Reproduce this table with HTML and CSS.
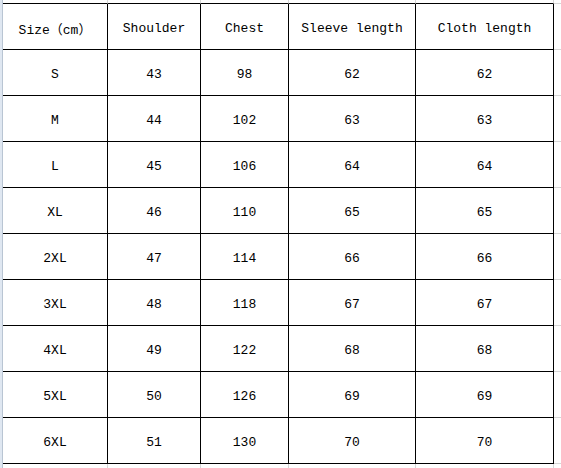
FILE: index.html
```html
<!DOCTYPE html>
<html>
<head>
<meta charset="utf-8">
<link rel="stylesheet" href="styles.css">
</head>
<body>
<div class="sheet">
  <div class="rh"></div><div class="gt"></div><div class="gt"></div><div class="gt"></div><div class="gt"></div><div class="gt"></div><div class="gr"></div>

  <div class="rh"></div><div class="c">Size（cm）</div><div class="c">Shoulder</div><div class="c">Chest</div><div class="c">Sleeve length</div><div class="c">Cloth length</div><div class="gr"></div>
  <div class="rh"></div><div class="c">S</div><div class="c">43</div><div class="c">98</div><div class="c">62</div><div class="c">62</div><div class="gr"></div>
  <div class="rh"></div><div class="c">M</div><div class="c">44</div><div class="c">102</div><div class="c">63</div><div class="c">63</div><div class="gr"></div>
  <div class="rh"></div><div class="c">L</div><div class="c">45</div><div class="c">106</div><div class="c">64</div><div class="c">64</div><div class="gr"></div>
  <div class="rh"></div><div class="c">XL</div><div class="c">46</div><div class="c">110</div><div class="c">65</div><div class="c">65</div><div class="gr"></div>
  <div class="rh"></div><div class="c">2XL</div><div class="c">47</div><div class="c">114</div><div class="c">66</div><div class="c">66</div><div class="gr"></div>
  <div class="rh"></div><div class="c">3XL</div><div class="c">48</div><div class="c">118</div><div class="c">67</div><div class="c">67</div><div class="gr"></div>
  <div class="rh"></div><div class="c">4XL</div><div class="c">49</div><div class="c">122</div><div class="c">68</div><div class="c">68</div><div class="gr"></div>
  <div class="rh"></div><div class="c">5XL</div><div class="c">50</div><div class="c">126</div><div class="c">69</div><div class="c">69</div><div class="gr"></div>
  <div class="rh"></div><div class="c">6XL</div><div class="c">51</div><div class="c">130</div><div class="c">70</div><div class="c">70</div><div class="gr"></div>

  <div class="rh"></div><div class="gb"></div><div class="gb"></div><div class="gb"></div><div class="gb"></div><div class="gb"></div><div class="gc"></div>
</div>
</body>
</html>
```

FILE: styles.css
```css
* {
  box-sizing: border-box;
}

html, body {
  margin: 0;
  padding: 0;
  background: #ffffff;
}

.sheet {
  display: grid;
  grid-template-columns: 3px 105px 93px 88px 127px 138px 1fr;
  grid-template-rows: 4px repeat(10, 46px) 1fr;
  width: 561px;
  height: 468px;
  font-family: "Liberation Mono", "Noto Sans CJK SC", monospace;
  font-size: 13px;
  color: #000;
}

.rh {
  background: #dfe7f1;
  border-right: 1px solid #b9c5d3;
}

.gt {
  border-right: 1px solid #d6d6d6;
  border-bottom: 1px solid #000;
}

.gr {
  border-bottom: 1px solid #d6d6d6;
}

.gb {
  border-right: 1px solid #d6d6d6;
}

.gc {
  background: #fff;
}

.c {
  border-right: 1px solid #000;
  border-bottom: 1px solid #000;
  display: flex;
  align-items: center;
  justify-content: center;
  padding-top: 3px;
  white-space: nowrap;
}
```
